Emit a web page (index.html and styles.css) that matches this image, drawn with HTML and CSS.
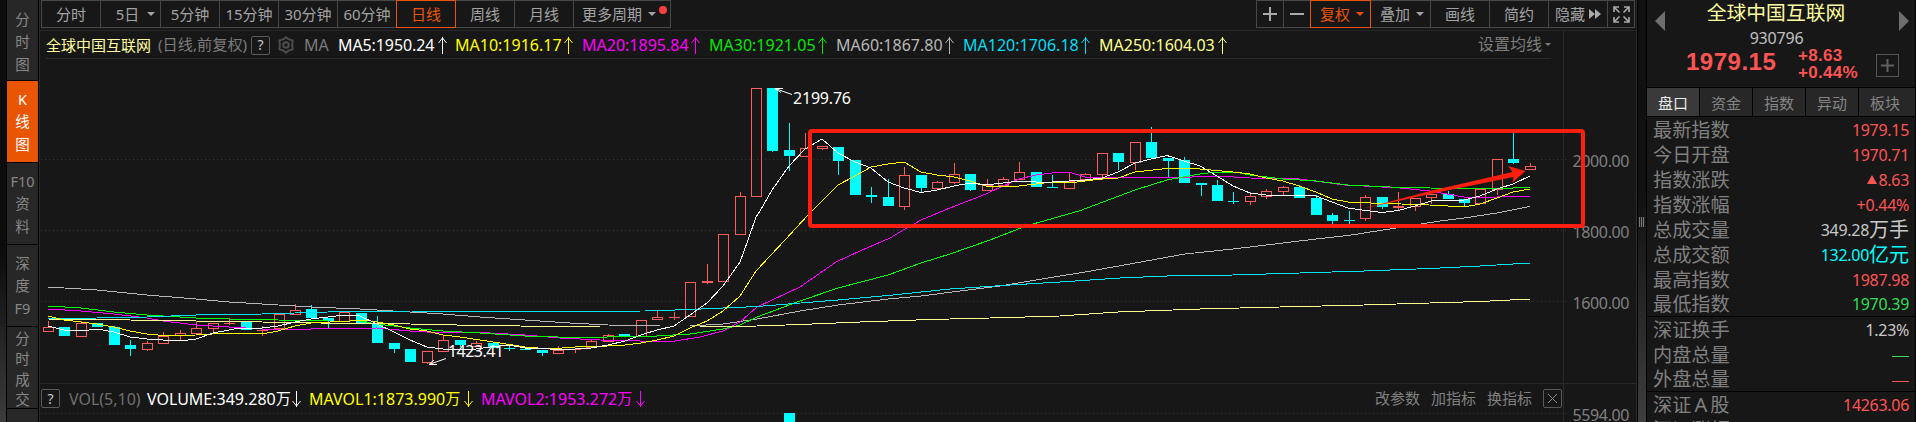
FILE: index.html
```html
<!DOCTYPE html>
<html lang="zh-CN">
<head>
<meta charset="utf-8">
<title>全球中国互联网 930796</title>
<link rel="stylesheet" href="styles.css">
</head>
<body>
<div class="app">
  <div class="edge"></div>
  <nav class="side">
    <div class="side-item"><span>分</span><span>时</span><span>图</span></div>
    <div class="side-item active"><span>K</span><span>线</span><span>图</span></div>
    <div class="side-item"><span>F10</span><span>资</span><span>料</span></div>
    <div class="side-item"><span>深</span><span>度</span><span>F9</span></div>
    <div class="side-item tight"><span>分</span><span>时</span><span>成</span><span>交</span></div>
    <div class="side-item"></div>
  </nav>

  <main class="chart">
    <div class="toolbar">
      <div class="group periods">
        <span class="btn">分时</span><span class="btn five">5日<i class="caret"></i></span><span class="btn">5分钟</span><span class="btn">15分钟</span><span class="btn">30分钟</span><span class="btn">60分钟</span><span class="btn on">日线</span><span class="btn">周线</span><span class="btn">月线</span><span class="btn more">更多周期<i class="caret"></i><i class="dot"></i></span>
      </div>
      <div class="group tools">
        <span class="btn sq"><svg width="14" height="14"><path d="M7 0V14M0 7H14" stroke="#a9a9a9" stroke-width="2"/></svg></span><span class="btn sq"><svg width="14" height="14"><path d="M0 7H14" stroke="#a9a9a9" stroke-width="2"/></svg></span><span class="btn on adj">复权<i class="caret"></i></span><span class="btn adj">叠加<i class="caret"></i></span><span class="btn">画线</span><span class="btn">简约</span><span class="btn hide">隐藏<svg width="12" height="10"><path d="M0 0L6 5L0 10ZM6 0L12 5L6 10Z" fill="#a9a9a9"/></svg></span><span class="btn sq"><svg width="17" height="17" fill="none" stroke="#a9a9a9" stroke-width="1.6"><path d="M1 6V1H6M1 1L6.5 6.5M11 1H16V6M16 1L10.500 6.500M1 11V16H6M1 16L6.500 10.500M16 11V16H11M16 16L10.500 10.500"/></svg></span>
      </div>
    </div>

    <div class="plot">
      <svg class="canvas" id="canvas" width="1598" height="391" viewBox="39 31 1598 391"></svg>
      <div class="legend">
        <span class="name">全球中国互联网</span>
        <span class="mode">(日线,前复权)</span>
        <span class="help">?</span>
        <svg class="gear" width="18" height="18" viewBox="0 0 18 18" fill="none" stroke="#4d4d4d" stroke-width="2"><path d="M9 1.2L11.4 3.2L15.6 4.4L15.2 9L15.6 13.2L11.6 14.6L9 16.8L6.4 14.6L2.4 13.2L2.8 9L2.4 4.4L6.6 3.2Z"/><circle cx="9" cy="9" r="2.8"/></svg>
        <span class="ma-tag">MA</span>
        <span class="ma ma5">MA5:1950.24<svg width="10" height="17"><path d="M4.5 17V0M0.500 6L4.500 1L8.500 6"/></svg></span>
        <span class="ma ma10">MA10:1916.17<svg width="10" height="17"><path d="M4.5 17V0M0.500 6L4.500 1L8.500 6"/></svg></span>
        <span class="ma ma20">MA20:1895.84<svg width="10" height="17"><path d="M4.5 17V0M0.500 6L4.500 1L8.500 6"/></svg></span>
        <span class="ma ma30">MA30:1921.05<svg width="10" height="17"><path d="M4.5 17V0M0.500 6L4.500 1L8.500 6"/></svg></span>
        <span class="ma ma60">MA60:1867.80<svg width="10" height="17"><path d="M4.5 17V0M0.500 6L4.500 1L8.500 6"/></svg></span>
        <span class="ma ma120">MA120:1706.18<svg width="10" height="17"><path d="M4.5 17V0M0.500 6L4.500 1L8.500 6"/></svg></span>
        <span class="ma ma250">MA250:1604.03<svg width="10" height="17"><path d="M4.5 17V0M0.500 6L4.500 1L8.500 6"/></svg></span>
        <span class="setma">设置均线<i class="caret small"></i></span>
      </div>
      <div class="vol">
        <span class="help">?</span>
        <span class="vol-tag">VOL(5,10)</span>
        <span class="ma v0">VOLUME:349.280<b>万</b><svg width="10" height="17"><path d="M4.5 1V17M0.500 11L4.500 16L8.500 11"/></svg></span>
        <span class="ma v1">MAVOL1:1873.990<b>万</b><svg width="10" height="17"><path d="M4.5 1V17M0.500 11L4.500 16L8.500 11"/></svg></span>
        <span class="ma v2">MAVOL2:1953.272<b>万</b><svg width="10" height="17"><path d="M4.5 1V17M0.500 11L4.500 16L8.500 11"/></svg></span>
        <span class="links"><span>改参数</span><span>加指标</span><span>换指标</span><span class="help close"><svg width="11" height="11"><path d="M1 1L10 10M10 1L1 10" stroke="#8a8a8a"/></svg></span></span>
      </div>
    </div>
  </main>

  <div class="splitter"><i class="grip"></i></div>

  <aside class="quote">
    <header class="head">
      <svg class="prev" width="10" height="20"><path d="M10 0V20L0 10Z" fill="#6e6e6e"/></svg>
      <div class="mid">
        <div class="title">全球中国互联网</div>
        <div class="code">930796</div>
        <div class="price-row">
          <span class="price">1979.15</span>
          <span class="chg"><span>+8.63</span><span>+0.44%</span></span>
        </div>
      </div>
      <div class="rightcol">
        <svg width="10" height="20"><path d="M0 0V20L10 10Z" fill="#6e6e6e"/></svg>
        <span class="add"><svg width="13" height="13"><path d="M6.5 0V13M0 6.5H13" stroke="#606060" stroke-width="2"/></svg></span>
      </div>
    </header>
    <div class="tabs"><span class="tab cur">盘口</span><span class="tab">资金</span><span class="tab">指数</span><span class="tab">异动</span><span class="tab">板块</span></div>
    <div class="rows">
      <div class="row"><span>最新指数</span><em class="up">1979.15</em></div>
      <div class="row"><span>今日开盘</span><em class="up">1970.71</em></div>
      <div class="row"><span>指数涨跌</span><em class="up"><i class="tri"></i>8.63</em></div>
      <div class="row"><span>指数涨幅</span><em class="up">+0.44%</em></div>
      <div class="row"><span>总成交量</span><em>349.28<b>万手</b></em></div>
      <div class="row"><span>总成交额</span><em class="cy">132.00<b>亿元</b></em></div>
      <div class="row"><span>最高指数</span><em class="up">1987.98</em></div>
      <div class="row last"><span>最低指数</span><em class="down">1970.39</em></div>
      <div class="row"><span>深证换手</span><em>1.23%</em></div>
      <div class="row"><span>内盘总量</span><em class="down"><i class="dash"></i></em></div>
      <div class="row last"><span>外盘总量</span><em class="up"><i class="dash"></i></em></div>
      <div class="row"><span>深证<b class="lat">A</b>股</span><em class="up">14263.06</em></div>
      <div class="row"><span>深证涨幅</span><em></em></div>
    </div>
  </aside>
</div>
<script src="chart.js"></script>
</body>
</html>
```
FILE: styles.css
```css
* { box-sizing: border-box; }
body {
  margin: 0;
  background: #171717;
  font-family: "Noto Sans", "Noto Sans CJK SC", sans-serif;
  color: #808080;
  overflow: hidden;
}
i, em { font-style: normal; }
b { font-weight: normal; }
.app { display: flex; width: 1916px; height: 422px; overflow: hidden; }
.edge { width: 6px; background: linear-gradient(#0c0c0c 60%, #3c3c3c); }

.side { width: 33px; flex: none; background: #000; padding: 0 1px; }
.side-item {
  height: 81px; margin-bottom: 1px; width: 31px;
  background: #272727; color: #878787;
  display: flex; flex-direction: column; align-items: center; justify-content: center;
  font-size: 14.5px; line-height: 22.4px;
}
.side-item:first-child { height: 80px; padding-top: 3px; }
.side-item.active { background: #ea5504; color: #fff; }
.side-item.tight { line-height: 20.2px; padding-top: 2px; }

.chart { width: 1598px; flex: none; display: flex; flex-direction: column; border-left: 1px solid #2a2a2a; border-right: 1px solid #2a2a2a; }
.toolbar { height: 31px; flex: none; display: flex; justify-content: space-between; padding: 0 1px; border-bottom: 1px solid #262626; }
.group { display: flex; height: 28px; }
.btn {
  width: 60px; height: 28px; margin-right: -1px; flex: none;
  border: 1px solid #484848; color: #a3a3a3; font-size: 15px; line-height: 1;
  display: flex; align-items: center; justify-content: center; white-space: nowrap;
}
.btn.on { border-color: #ea5504; color: #ea5504; z-index: 1; }
.periods .btn:nth-child(2) { width: 61px; }
.five { gap: 8px; padding-left: 10px; }
.more { width: 98px; gap: 6px; padding-left: 5px; }
.more .dot { margin: -9px 0 0 -3px; }
.dot { width: 8px; height: 8px; border-radius: 50%; background: #ff4040; }
.caret { border: 4px solid transparent; border-top-color: currentColor; border-bottom: 0; }
.caret.small { border-width: 3.5px 3.5px 0; margin-left: 3px; }
.sq { width: 28px; }
.adj { width: 61px; gap: 6px; padding-left: 3px; }
.hide { gap: 4px; }
.tools { margin-right: 1px; }

.plot { position: relative; flex: 1; }
.canvas { position: absolute; left: -1px; top: 0; }
.legend { position: relative; height: 28px; padding-top: 1px; margin: 0 85px 0 6px; display: flex; align-items: center; border-bottom: 1px solid #2b2b2b; white-space: nowrap; font-size: 16px; line-height: 1; }
.name { width: 112px; color: #ffffa0; font-size: 15px; }
.mode { width: 93px; color: #7c7c7c; font-size: 15.2px; }
.help { width: 19px; height: 19px; border: 1px solid #5a5a5a; border-radius: 2px; color: #c8c8c8; font-size: 14px; display: flex; align-items: center; justify-content: center; flex: none; }
.gear { margin: 0 9px 0 7px; flex: none; }
.ma-tag { width: 34px; color: #7c7c7c; }
.ma { display: flex; align-items: center; justify-content: space-between; flex: none; }
.ma svg { fill: none; stroke: currentColor; stroke-width: 1; }
.ma5 { width: 110px; margin-right: 7px; color: #fff; letter-spacing: -.1px; }
.ma10 { width: 119px; margin-right: 8px; color: #ff0; }
.ma20 { width: 119px; margin-right: 8px; color: #f0f; }
.ma30 { width: 119px; margin-right: 8px; color: #00e600; }
.ma60 { width: 119px; margin-right: 8px; color: #b8b8b8; }
.ma120 { width: 128px; margin-right: 8px; color: #00dcf0; }
.ma250 { width: 129px; color: #ffff90; }
.setma { margin: -2px 0 0 auto; font-size: 16px; display: flex; align-items: center; color: #7c7c7c; }

.vol { position: relative; margin-top: 324px; padding: 3px 74px 0 1px; height: 28px; display: flex; align-items: center; white-space: nowrap; font-size: 16px; line-height: 1; }
.vol b { font-size: 15px; margin-right: auto; }
.vol-tag { color: #707070; margin-left: 9px; width: 78px; }
.v0 { color: #fff; width: 155px; margin-right: 7px; }
.v1 { color: #ff0; width: 165px; margin-right: 7px; }
.v2 { color: #f0f; width: 165px; }
.links { margin-left: auto; display: flex; align-items: center; gap: 11px; font-size: 15px; }

.splitter { width: 10px; flex: none; border: solid #000; border-width: 0 1px; background: linear-gradient(#101010 45%, #3e3e3e); padding: 217px 0 0 1px; }
.grip { display: block; width: 6px; height: 10px; background: repeating-linear-gradient(90deg, #777 0 1px, #222 1px 2px); }

.quote { width: 269px; flex: none; border-right: 1px solid #000; }
.head { height: 88px; display: flex; border-bottom: 1px solid #000; }
.prev { margin: 11px 0 0 8px; }
.mid { flex: 1; display: flex; flex-direction: column; align-items: center; }
.title { color: #ffffa0; font-size: 19.8px; line-height: 26px; padding-left: 5px; }
.code { color: #c0c0c0; font-size: 16px; letter-spacing: -.2px; line-height: 24px; padding-left: 6px; }
.price-row { display: flex; width: 193px; font-family: "Liberation Sans", sans-serif; font-weight: bold; color: #ff5454; align-self: flex-start; margin: -2px 0 0 21px; }
.price { font-size: 24px; line-height: 28px; letter-spacing: .5px; width: 112px; }
.chg { font-size: 17px; line-height: 17px; letter-spacing: .3px; display: flex; flex-direction: column; margin-top: -1px; }
.rightcol { width: 33px; display: flex; flex-direction: column; align-items: flex-end; padding: 11px 6px 0 0; }
.add { width: 23px; height: 23px; border: 1.5px solid #555; margin: 23px 10px 0 0; display: flex; align-items: center; justify-content: center; flex: none; }
.tabs { height: 29px; display: flex; gap: 1px; background: #000; border-bottom: 1px solid #000; }
.tab { width: 52px; background: #272727; color: #858585; font-size: 15px; display: flex; align-items: center; justify-content: center; }
.tab:last-child { flex: 1; padding-right: 4px; }
.tab.cur { background: #3a3a3a; color: #e8e8e8; }
.row { height: 25px; display: flex; justify-content: space-between; align-items: center; padding: 0 6px 0 6px; font-size: 19.2px; line-height: 1; white-space: nowrap; }
.row.last { border-bottom: 1px solid #000; }
.row em { font-size: 16px; letter-spacing: -.3px; color: #c8c8c8; display: flex; align-items: center; }
.row em b { font-size: 20px; letter-spacing: 0; }
.row em.up { color: #ff5454; }
.row em.down { color: #33dd55; }
.row em.cy { color: #00ffff; }
.lat { font-size: 20px; padding: 0 3px; }
.tri { border: 5px solid transparent; border-bottom: 9px solid #ff5454; border-top: 0; margin-right: 1px; }
.dash { width: 17px; height: 1px; background: currentColor; margin-top: 4px; }
```
FILE: chart.js
```js
const NS = 'http://www.w3.org/2000/svg';
const canvas = document.getElementById('canvas');

function add(tag, attrs, text) {
  const el = document.createElementNS(NS, tag);
  for (const k in attrs) el.setAttribute(k, attrs[k]);
  if (text) el.textContent = text;
  canvas.appendChild(el);
}

// Grid, axis and separators
[159, 230, 301, 413].forEach(y =>
  add('path', { d: `M41 ${y}.5H1567`, stroke: '#363636', 'stroke-dasharray': '1 3' }));
add('path', { d: 'M1563.5 31V422M39 383.5H1637', stroke: '#2a2a2a', fill: 'none' });
[['2000.00', 167], ['1800.00', 238], ['1600.00', 309], ['5594.00', 421]].forEach(([t, y]) =>
  add('text', { x: 1572.5, y, fill: '#808080', 'font-size': 16, textLength: 57 }, t));

// Candles: kind, body top, body bottom, high, low
const candles = [
['r',327,332,321],['c',327,336],['r',323,337,321],['c',323,327],['c',327,345,326],['c',345,349,340,356],
['r',343,350,341,351],['r',336,344,332],['r',333,336,330,341],['r',328,334,321],['r',323,329,323,332],['r',323,324,318,325],
['c',322,330],['r',330,331,326,336],['r',314,329],['r',310,315,304],['c',309,318,305],['c',318,321,318,329],
['r',312,322],['c',313,323],['c',323,343,316],['c',343,349,343,353],['c',349,362],['r',351,363,351,364],
['r',340,352,335],['c',340,345,340,347],['r',343,347,341],['c',343,348],['c',348,349,346,351],['c',349,350],
['c',350,353,350,356],['r',350,354,346],['r',349,350,349,353],['r',341,348,339],['r',335,342,334],['c',334,336],
['r',320,337],['r',317,320,311],['r',317,318,312,320],['r',282,317],['r',281,283,264,284],['r',234,282],
['r',196,235,192],['r',88,197],['c',88,151,88,152],['c',150,156,123,171],['r',148,157,133],['r',146,149,146,150],
['c',147,161,147,175],['c',160,195],['c',195,197,187,203],['c',197,206,179],['r',175,207,167,210],['c',175,188,175,192],
['r',182,189,181,190],['r',174,183,163,184],['c',174,190,174,191],['r',185,191,179],['r',179,186,177],['r',172,180,162],
['c',172,187],['c',187,188,175],['r',181,189,173],['r',174,180,173],['r',153,175,153,180],['c',153,162,153,170],
['r',142,163,142,170],['c',142,158,127],['c',158,161,158,177],['c',160,183,157],['c',183,185,183,196],['c',185,201,180],
['c',201,202,192,204],['r',196,202,192,205],['r',191,197,189,199],['r',187,192,186,195],['c',187,198,185],['c',198,215,195],
['c',215,221,213,224],['c',220,221,211,224],['r',197,219,195,221],['c',197,207,197,209],['r',206,208,192,210],['r',198,207,198,211],
['r',194,198,194,204],['c',194,199,191],['c',199,203,199,206],['r',189,204],['r',159,190,159,195],['c',159,163,133,164],
['r',166,170,163]
];
candles.forEach(([kind, top, bottom, high, low], i) => {
  const x = Math.round(48 + 16.465 * i);
  const color = kind === 'r' ? '#ff5c5c' : '#00ffff';
  const hi = high || top, lo = low || bottom;
  if (hi < top) add('rect', { x, y: hi, width: 1, height: top - hi, fill: color });
  if (lo > bottom) add('rect', { x, y: bottom, width: 1, height: lo - bottom, fill: color });
  if (kind === 'c' || bottom - top < 3) add('rect', { x: x - 5, y: top, width: 11, height: bottom - top, fill: color });
  else add('rect', { x: x - 4.5, y: top + .5, width: 10, height: bottom - top - 1, fill: 'none', stroke: color });
});

// Moving averages
const lines = {
  '#b8b8b8': '48,287 97,290 147,295 196,299 229,302 262,304 311,307 360,309 410,312 443,314 480,317 525,320 570,323 608,325 660,326 690,326 723,324 757,319 800,311 838,305 888,299 921,296 960,291 1000,286 1048,278 1085,272 1130,264 1185,254 1233,249 1283,243 1316,239 1348,235.5 1396,228 1440,221 1464,218 1497,213 1530,206.5',
  '#ff00ff': '48,309 81,311 114,314 147,318 163,321 196,325 229,327 262,329 311,329 377,328 410,331 443,333 460,332 490,333 525,335 560,338 600,340 640,341 675,341 700,337 723,331 740,322 757,307 800,287 836,262 860,251 890,238 905,229 921,220 950,208 986,194 1003,186 1019,179 1036,175 1052,173 1069,172 1085,177 1118,177 1167,178 1217,176 1250,178 1299,179 1345,185 1400,188 1430,191 1464,197 1480,198 1497,197 1530,196',
  '#00ff00': '48,306 81,308 114,312 147,315 196,318 229,319 278,320 328,321 360,321 377,324 410,328 443,331 480,333 525,336 590,338 625,336 657,336 690,334 723,329 740,325 757,317 800,301 838,288 888,275 921,263 950,254 990,240 1026,226 1079,211 1135,190 1167,180 1200,174 1217,172 1235,172 1250,175 1283,179 1316,181 1348,185 1390,187 1430,188 1480,189 1530,187.5',
  '#00e4f8': '48,319 97,318 147,317 196,315 262,314 328,312 410,311 480,311.5 645,311 690,309.5 757,306.5 838,300 888,295.5 950,289 1010,285 1060,282 1120,278 1167,276 1233,275 1300,273 1364,271 1430,268.5 1480,266 1530,263',
  '#ffff90': '48,319 130,320 196,321 262,322 320,323 410,324 480,325.5 600,327 700,327 757,326 800,324.5 860,322 930,319.5 990,318 1060,316 1118,312 1200,309 1280,307 1364,305 1430,303 1480,301.5 1530,299',
  '#ffff00': '48,316 64,320 81,322 97,324 114,327 130,331 147,334 163,335.5 196,335 229,333 262,334 278,331 295,326 311,323 330,322 350,321 365,320 377,322 394,325 410,329 427,331 443,335 460,337 480,340 500,343 525,347 550,349 575,347 608,346 625,345 641,343 657,340 674,336 690,328 707,321 723,311 740,296 756,271 785,240 808,215 838,185 855,176 871,167 888,164 904,162 921,172 937,175 954,177 970,181 986,186 1003,187 1019,186 1036,184 1052,182 1069,183 1085,181 1102,179 1118,178 1135,172 1167,168.5 1200,169 1233,172 1250,174 1266,178 1283,181 1299,186 1316,192 1332,199 1348,202 1382,203.5 1420,204.5 1448,206 1464,207 1480,204 1497,198 1513,192 1530,189',
  '#ffffff': '48,326 64,330 81,331 97,329 114,332 130,337 147,339 163,340 180,341 196,339 213,333 229,330 240,328 262,328 278,326 295,322 311,319 328,317 345,315 360,316 377,324 394,332 410,340 427,347 443,349 460,349 476,349 490,347 509,345 525,348 550,349 575,349 591,348 608,345 625,341 641,335 657,330 674,326 690,315 707,303 723,286 740,262 748,240 756,217 760,211 772,190 789,166 805,149 822,139 838,153 855,162 871,168 888,182 904,188 921,192.5 937,190 954,186 970,183 986,185 1003,183 1019,181 1036,182 1052,182 1069,181 1085,180 1102,178 1118,172 1135,163 1151,159 1167,155.5 1184,161 1200,166 1217,176 1233,186 1250,193 1266,195 1283,195 1299,195 1316,196 1332,202 1348,208 1362,210 1382,212.5 1398,210.5 1415,206 1431,201 1448,200.5 1464,200 1480,196 1497,189 1513,184 1530,176'
};
for (const color in lines)
  add('polyline', { points: lines[color], fill: 'none', stroke: color, 'shape-rendering': 'crispEdges' });

// Volume bar
add('rect', { x: 784, y: 413, width: 11, height: 9, fill: '#00ffff' });

// Extreme price labels
add('path', { d: 'M792 94.5L775 88.5M775 88.5H783M775 88.5L781 92.5', stroke: '#fff', fill: 'none' });
add('text', { x: 793, y: 104, fill: '#fff', 'font-size': 16, textLength: 58 }, '2199.76');
add('path', { d: 'M446 358.5L429 364.5M429 364.5H437M429 364.5L434 360', stroke: '#fff', fill: 'none' });
add('text', { x: 448, y: 357, fill: '#fff', 'font-size': 16, textLength: 56 }, '1423.41');

// Range box and trend arrow
add('rect', { x: 810, y: 131, width: 773, height: 95, rx: 2, fill: 'none', stroke: '#ff1e10', 'stroke-width': 4 });
add('path', { d: 'M1362 209L1430 191L1512.500 172L1508 166L1525.5 171L1512.500 182.500L1513.500 177L1430 194Z', fill: '#ff1e10' });
```
